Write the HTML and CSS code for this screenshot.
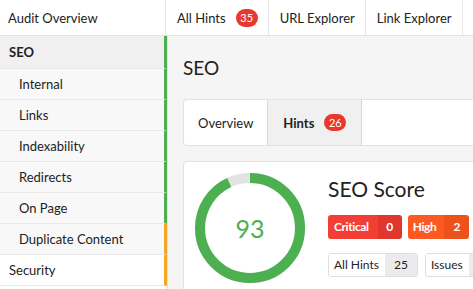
FILE: index.html
```html
<html>
	<head>
	<title>Audit Overview</title>
	<link rel="stylesheet" href="styles.css">
	</head>
	<body>
<div class="topbar">
	<div class="toptab first">Audit Overview</div>
	<div class="toptab">All Hints <span class="badge">35</span></div>
	<div class="toptab">URL Explorer</div>
	<div class="toptab">Link Explorer</div>
	<div class="toptab">Site Explorer</div>
</div>

<div class="layout">
	<div class="sidebar">
		<div class="item head good">SEO</div>
		<div class="item sub good">Internal</div>
		<div class="item sub good">Links</div>
		<div class="item sub good">Indexability</div>
		<div class="item sub good">Redirects</div>
		<div class="item sub good">On Page</div>
		<div class="item sub warn">Duplicate Content</div>
		<div class="item top warn">Security</div>
	</div>

	<div class="main">
		<h2>SEO</h2>
		<div class="tabs">
			<div class="tab">Overview</div>
			<div class="tab active">Hints <span class="badge">26</span></div>
		</div>

		<div class="card">
			<div class="ring">
				<svg width="110" height="110" viewBox="0 0 110 110">
					<circle cx="55" cy="55" r="50" fill="none" stroke="#e3e3e3" stroke-width="10"/>
					<circle cx="55" cy="55" r="50" fill="none" stroke="#4caf50" stroke-width="10"
						stroke-dasharray="292.2 314.2" transform="rotate(-90 55 55)"/>
				</svg>
				<span class="score">93</span>
			</div>
			<div class="info">
				<div class="title">SEO Score</div>
				<div class="row">
					<span class="pill critical"><span class="lbl">Critical</span><span class="num">0</span></span>
					<span class="pill high"><span class="lbl">High</span><span class="num">2</span></span>
				</div>
				<div class="row">
					<span class="btn"><span class="lbl">All Hints</span><span class="num">25</span></span>
					<span class="btn"><span class="lbl">Issues</span><span class="num">12</span></span>
				</div>
			</div>
		</div>
	</div>
</div>
	</body>
</html>
```

FILE: styles.css
```css
body {
	margin: 0;
	font-family: Lato, "Open Sans", sans-serif;
	font-size: 13px;
	color: #222;
	background: #f5f5f5;
	overflow: hidden;
	height: 289px;
}

.topbar {
	display: flex;
	height: 35px;
	background: #fff;
	border-bottom: 1px solid #e2e2e2;
	white-space: nowrap;
	overflow: hidden;
}
.toptab {
	flex: none;
	display: flex;
	align-items: center;
	padding: 0 10px 0 11px;
	border-right: 1px solid #e6e6e6;
}
.toptab.first {
	width: 157px;
	padding: 0 0 0 8px;
}

.badge {
	display: inline-block;
	margin-left: 10px;
	min-width: 22px;
	height: 18px;
	line-height: 18px;
	border-radius: 9px;
	background: #e8392f;
	color: #fff;
	font-size: 11px;
	font-weight: normal;
	text-align: center;
}

.layout {
	display: flex;
}

.sidebar {
	width: 167px;
	flex: none;
	background: #fff;
	border-right: 1px solid #e2e2e2;
}
.item {
	height: 30px;
	line-height: 30px;
	border-bottom: 1px solid #e8e8e8;
	border-right: 3px solid #4caf50;
	background: #f8f8f8;
}
.item.head {
	height: 32px;
	line-height: 32px;
	padding-left: 9px;
	font-weight: bold;
	background: #f0f0f0;
}
.item.sub { padding-left: 19px; }
.item.top {
	padding-left: 9px;
	background: #fff;
}
.item.warn { border-right-color: #f5a623; }

.main {
	flex: 1;
	min-width: 0;
	padding-left: 15px;
	overflow: hidden;
}
h2 {
	margin: 21px 0 20px;
	font-size: 19px;
	font-weight: normal;
	line-height: 22px;
}

.tabs {
	display: flex;
	height: 45px;
	background: #fff;
	border: 1px solid #e2e2e2;
	border-right: none;
	border-radius: 4px 0 0 4px;
}
.tab {
	display: flex;
	align-items: center;
	padding: 0 14px;
	border-right: 1px solid #d8d8d8;
}
.tab.active {
	padding: 0 15px 0 15px;
	background: #f0f0f0;
	font-weight: bold;
}
.tab.active .badge { height: 17px; line-height: 17px; }

.card {
	display: flex;
	margin-top: 15px;
	padding: 11px 0 20px 11px;
	background: #fff;
	border: 1px solid #e2e2e2;
	border-right: none;
	border-radius: 4px 0 0 4px;
}
.ring {
	position: relative;
	flex: none;
	width: 110px;
	height: 110px;
}
.ring svg { display: block; }
.score {
	position: absolute;
	left: 0;
	right: 0;
	top: 40px;
	text-align: center;
	font-size: 25px;
	color: #4caf50;
}

.info {
	margin-left: 23px;
	padding-top: 3px;
	white-space: nowrap;
}
.title {
	font-size: 21px;
	line-height: 26px;
}
.row {
	display: flex;
	gap: 6px;
	margin-top: 13px;
}
.row + .row { margin-top: 14px; gap: 7px; }

.pill {
	flex: none;
	display: flex;
	height: 24px;
	line-height: 24px;
	border-radius: 3px;
	overflow: hidden;
	color: #fff;
	font-weight: bold;
	font-size: 12px;
	letter-spacing: -0.4px;
}
.pill .lbl { padding: 0 9px 0 6px; }
.pill .num { width: 24px; text-align: center; }
.critical .lbl { background: #f23e35; }
.critical .num { background: #df372e; }
.high .lbl { padding: 0 8px 0 5px; background: #fd5a21; }
.high .num { width: 25px; background: #ee521b; }

.btn {
	flex: none;
	display: flex;
	height: 22px;
	line-height: 22px;
	border: 1px solid #dedede;
	border-radius: 3px;
	overflow: hidden;
	font-size: 12px;
}
.btn .lbl { padding: 0 6px 0 5px; background: #fff; }
.btn .num { width: 32px; text-align: center; background: #ebebeb; }
```
